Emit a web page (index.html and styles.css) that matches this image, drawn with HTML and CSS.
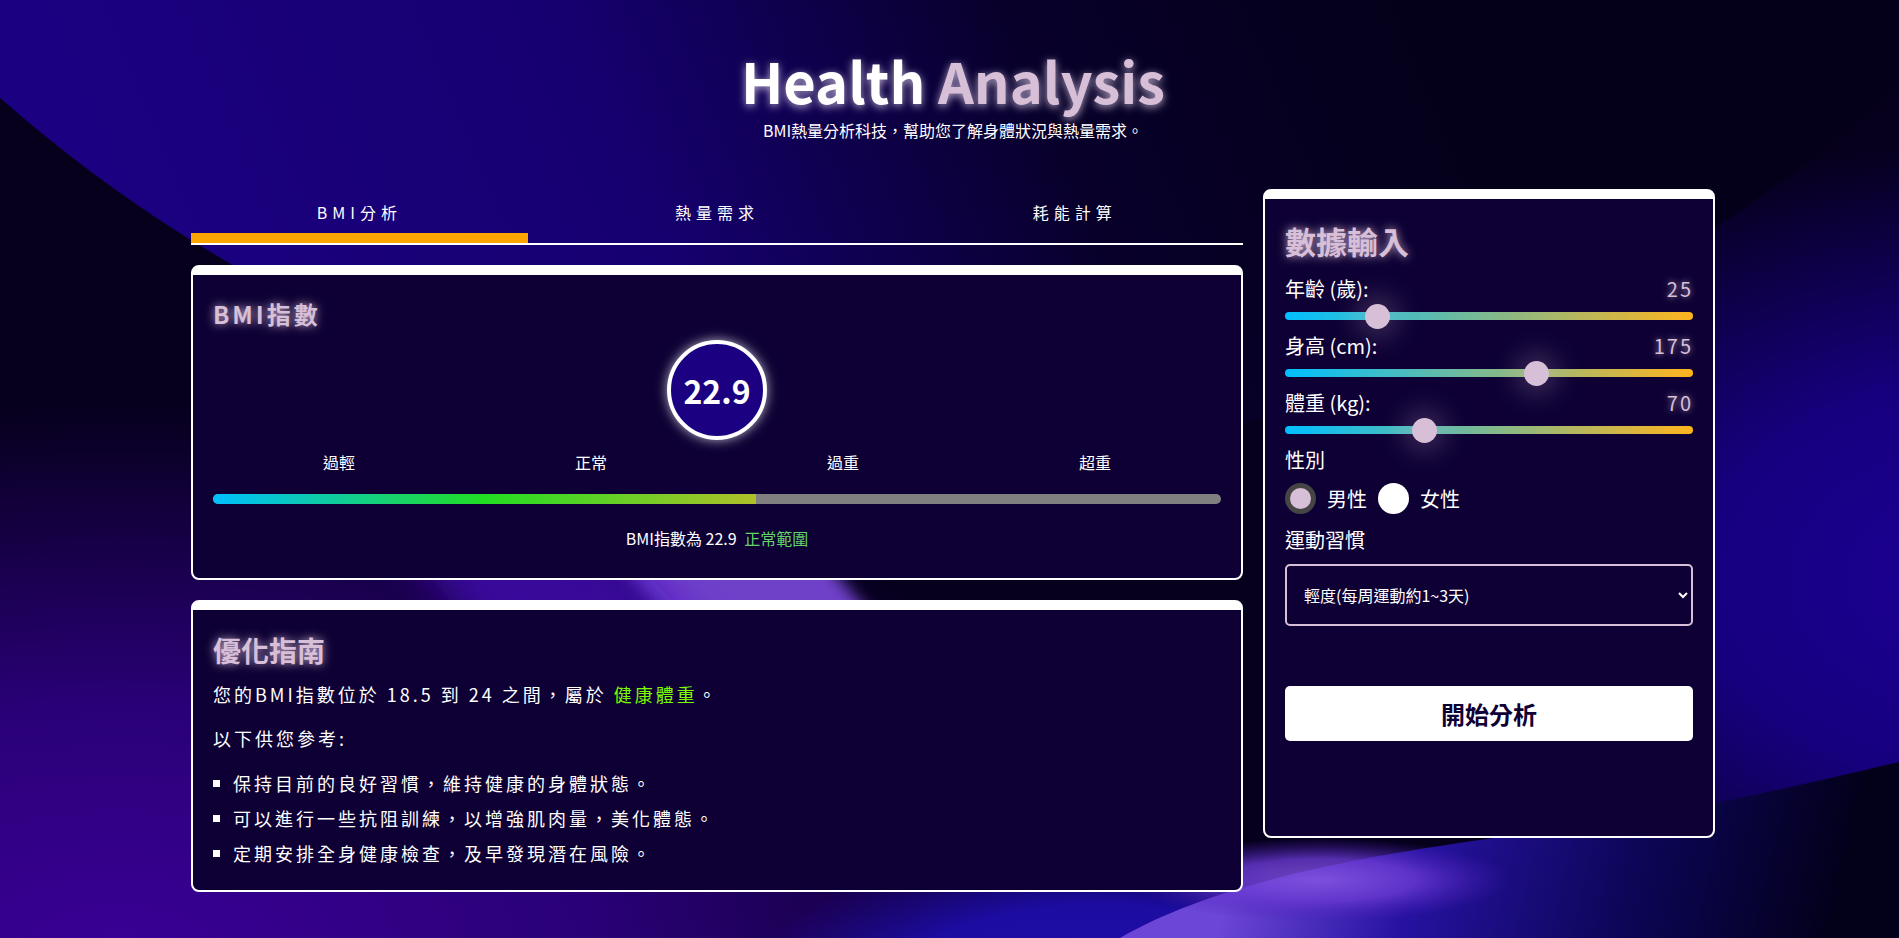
FILE: index.html
```html
<!DOCTYPE html>
<html lang="zh-Hant">
<head>
<meta charset="utf-8">
<title>Health Analysis</title>
<link rel="stylesheet" href="styles.css">
</head>
<body>
<svg class="bg" viewBox="0 0 1899 938" preserveAspectRatio="none" aria-hidden="true">
  <defs>
    <linearGradient id="gTop" gradientUnits="userSpaceOnUse" x1="150" y1="380" x2="1350" y2="-120">
      <stop offset="0" stop-color="#1c0082"/>
      <stop offset="0.4" stop-color="#160070"/>
      <stop offset="0.72" stop-color="#08002a"/>
      <stop offset="1" stop-color="#05001a"/>
    </linearGradient>
    <radialGradient id="gPurple" cx="0.5" cy="0.5" r="0.5">
      <stop offset="0" stop-color="#3a0096"/>
      <stop offset="0.45" stop-color="#2a0078"/>
      <stop offset="1" stop-color="#2a0078" stop-opacity="0"/>
    </radialGradient>
    <radialGradient id="gIndigo" cx="0.5" cy="0.5" r="0.5">
      <stop offset="0" stop-color="#1c0096"/>
      <stop offset="0.45" stop-color="#17007f"/>
      <stop offset="1" stop-color="#17007f" stop-opacity="0"/>
    </radialGradient>
    <radialGradient id="gViolet" cx="0.5" cy="0.5" r="0.5">
      <stop offset="0" stop-color="#8a58e6"/>
      <stop offset="0.5" stop-color="#6a3ad2"/>
      <stop offset="1" stop-color="#4a1cb8" stop-opacity="0"/>
    </radialGradient>
    <radialGradient id="gBlue" cx="0.5" cy="0.5" r="0.5">
      <stop offset="0" stop-color="#2210b0"/>
      <stop offset="0.6" stop-color="#1c0ca0"/>
      <stop offset="1" stop-color="#1c0ca0" stop-opacity="0"/>
    </radialGradient>
    <linearGradient id="gWave" gradientUnits="userSpaceOnUse" x1="1240" y1="840" x2="1820" y2="980">
      <stop offset="0" stop-color="#6c46d6"/>
      <stop offset="0.3" stop-color="#2612a0"/>
      <stop offset="0.65" stop-color="#0c0658"/>
      <stop offset="1" stop-color="#03001a"/>
    </linearGradient>
    <filter id="blur8"><feGaussianBlur stdDeviation="8"/></filter>
    <filter id="blur20"><feGaussianBlur stdDeviation="20"/></filter>
  </defs>
  <rect width="1899" height="938" fill="#06001c"/>
  <ellipse cx="120" cy="960" rx="1050" ry="560" fill="url(#gPurple)"/>
  <ellipse cx="1990" cy="580" rx="640" ry="440" fill="url(#gIndigo)"/>
  <circle cx="943" cy="-968" r="1423" fill="url(#gTop)"/>
  <ellipse cx="1100" cy="1000" rx="360" ry="160" fill="url(#gBlue)"/>
  <polygon points="580,520 790,520 1010,780 800,780" fill="#7a48da" filter="url(#blur8)" opacity="0.9"/>
  <polygon points="380,520 600,520 830,780 610,780" fill="#4a10c0" filter="url(#blur20)" opacity="0.7"/>
  <path d="M1120 938 C1220 880 1380 852 1540 832 C1690 812 1800 785 1899 762 L1899 938 Z" fill="url(#gWave)"/>
  <ellipse cx="1320" cy="880" rx="190" ry="42" fill="url(#gViolet)" opacity="0.8"/>
</svg>

<header class="hero">
  <h1 class="title">Health <span class="title-accent">Analysis</span></h1>
  <p class="subtitle">BMI熱量分析科技，幫助您了解身體狀況與熱量需求。</p>
</header>

<main class="layout">
  <section class="left-col">
    <nav class="tabs">
      <div class="tab active">BMI分析</div>
      <div class="tab">熱量需求</div>
      <div class="tab">耗能計算</div>
    </nav>

    <div class="card bmi-card">
      <h2 class="card-title">BMI指數</h2>
      <div class="bmi-circle">22.9</div>
      <div class="scale-labels">
        <span>過輕</span><span>正常</span><span>過重</span><span>超重</span>
      </div>
      <div class="bmi-bar"><div class="bmi-fill" style="width:53.9%"></div></div>
      <p class="bmi-result">BMI指數為 22.9 <span class="status">正常範圍</span></p>
    </div>

    <div class="card guide-card">
      <h2 class="card-title">優化指南</h2>
      <p class="guide-text">您的BMI指數位於 18.5 到 24 之間，屬於 <span class="highlight">健康體重</span>。</p>
      <p class="guide-text">以下供您參考:</p>
      <ul class="tips">
        <li>保持目前的良好習慣，維持健康的身體狀態。</li>
        <li>可以進行一些抗阻訓練，以增強肌肉量，美化體態。</li>
        <li>定期安排全身健康檢查，及早發現潛在風險。</li>
      </ul>
    </div>
  </section>

  <aside class="card side-card">
    <h2 class="card-title">數據輸入</h2>
    <div class="field">
      <div class="field-head"><span>年齡 (歲):</span><span class="field-value">25</span></div>
      <div class="slider"><span class="thumb" style="left:92px"></span></div>
    </div>
    <div class="field">
      <div class="field-head"><span>身高 (cm):</span><span class="field-value">175</span></div>
      <div class="slider"><span class="thumb" style="left:251px"></span></div>
    </div>
    <div class="field">
      <div class="field-head"><span>體重 (kg):</span><span class="field-value">70</span></div>
      <div class="slider"><span class="thumb" style="left:139px"></span></div>
    </div>
    <div class="field-label">性別</div>
    <div class="radios">
      <span class="radio checked"></span><span class="radio-label">男性</span>
      <span class="radio"></span><span class="radio-label">女性</span>
    </div>
    <div class="field-label sub">運動習慣</div>
    <select class="select">
      <option>輕度(每周運動約1~3天)</option>
    </select>
    <button class="btn" type="button">開始分析</button>
  </aside>
</main>
</body>
</html>
```

FILE: styles.css
```css
* { box-sizing: border-box; }

html, body { height: 938px; }

body {
  margin: 0;
  padding-left: 7px;
  position: relative;
  overflow: hidden;
  background: #06001c;
  color: #fff;
  font-family: "Noto Sans CJK TC", "Noto Sans", sans-serif;
}

.bg {
  position: absolute;
  left: 0;
  top: 0;
  width: 1899px;
  height: 938px;
  z-index: -1;
}

.hero {
  text-align: center;
  padding-top: 48px;
}

.title {
  margin: 0;
  font-size: 56px;
  line-height: 64px;
  font-weight: 700;
  text-shadow: 0 2px 9px rgba(230, 215, 240, 0.8);
}

.title-accent { color: #d8bfd8; }

.subtitle {
  margin: 6px 0 0;
  font-size: 16px;
  line-height: 24px;
}

.layout {
  display: flex;
  align-items: flex-start;
  gap: 20px;
  width: 1524px;
  margin: 47px auto 0;
}

.left-col { width: 1052px; flex: none; }

.tabs {
  display: flex;
  justify-content: space-between;
  border-bottom: 2px solid #fff;
}

.tab {
  width: 32%;
  text-align: center;
  padding: 11px 0 9px;
  border-bottom: 10px solid transparent;
  font-size: 16px;
  line-height: 24px;
  letter-spacing: 5px;
}

.tab.active { border-bottom-color: #ffa500; }

.card {
  background: #0e0034;
  border: 2px solid #fff;
  border-top-width: 10px;
  border-radius: 8px;
  padding: 20px;
}

.card-title {
  margin: 0;
  color: #d8bfd8;
  font-weight: 700;
  text-shadow: 0 0 10px rgba(216, 191, 216, 0.9);
}

.bmi-card {
  margin-top: 20px;
  padding-bottom: 28px;
}

.bmi-card .card-title {
  font-size: 24px;
  line-height: 38px;
  letter-spacing: 3px;
}

.bmi-circle {
  width: 100px;
  height: 100px;
  margin: 7px auto 0;
  border: 4px solid #fff;
  border-radius: 50%;
  background: #1c0082;
  display: flex;
  align-items: center;
  justify-content: center;
  font-size: 32px;
  font-weight: 700;
  box-shadow: 0 0 12px rgba(255, 255, 255, 0.7);
}

.scale-labels {
  display: grid;
  grid-template-columns: repeat(4, 1fr);
  text-align: center;
  margin-top: 10px;
  font-size: 16px;
  line-height: 24px;
}

.bmi-bar {
  margin-top: 20px;
  height: 10px;
  border-radius: 5px;
  background: #808080;
  overflow: hidden;
}

.bmi-fill {
  height: 100%;
  background: linear-gradient(to right, #00bfff, #22dd22 50%, #b0c02a);
}

.bmi-result {
  margin: 22px 0 0;
  text-align: center;
  font-size: 16px;
  line-height: 24px;
}

.bmi-result .status {
  color: #62d466;
  margin-left: 4px;
}

.guide-card {
  margin-top: 20px;
  padding-bottom: 25px;
}

.guide-card .card-title {
  font-size: 28px;
  line-height: 40px;
}

.guide-text {
  margin: 12px 0 0;
  font-size: 18px;
  line-height: 24px;
  letter-spacing: 3px;
}

.guide-text + .guide-text { margin-top: 20px; }

.highlight { color: #7cfc00; }

.tips {
  list-style: none;
  margin: 21px 0 0;
  padding: 0;
  font-size: 18px;
  line-height: 24px;
  letter-spacing: 3px;
}

.tips li {
  display: flex;
  align-items: center;
  gap: 13px;
  margin-bottom: 11px;
}

.tips li:last-child { margin-bottom: 0; }

.tips li::before {
  content: "";
  flex: none;
  width: 7px;
  height: 7px;
  background: #fff;
}

.side-card {
  width: 452px;
  flex: none;
  padding: 20px 20px 95px;
}

.side-card .card-title {
  font-size: 31px;
  line-height: 44px;
  margin-bottom: 11px;
}

.field { margin-bottom: 11px; }

.field-head {
  display: flex;
  justify-content: space-between;
  font-size: 20px;
  line-height: 30px;
}

.field-value {
  color: #d8bfd8;
  letter-spacing: 2px;
  text-shadow: 0 0 6px rgba(216, 191, 216, 0.8);
}

.slider {
  position: relative;
  height: 8px;
  margin-top: 8px;
  border-radius: 4px;
  background: linear-gradient(to right, #00bfff, #ffb41e);
}

.thumb {
  position: absolute;
  top: 50%;
  width: 25px;
  height: 25px;
  margin: -12.5px 0 0 -12.5px;
  border-radius: 50%;
  background: #d8bfd8;
  box-shadow: 0 0 24px 10px rgba(216, 191, 216, 0.2);
}

.field-label {
  font-size: 20px;
  line-height: 30px;
}

.field-label.sub { margin-top: 11px; }

.radios {
  display: flex;
  align-items: center;
  height: 31px;
  margin-top: 8px;
  font-size: 20px;
  line-height: 30px;
}

.radio {
  flex: none;
  width: 31px;
  height: 31px;
  border-radius: 50%;
  background: #fff;
}

.radio.checked {
  background: #d8bfd8;
  border: 5px solid #454545;
}

.radio-label { margin: 0 11px; }

.select {
  display: block;
  width: 100%;
  height: 62px;
  margin-top: 9px;
  padding: 0 10px 0 13px;
  border: 2px solid #d8bfd8;
  border-radius: 5px;
  background: #0e0034;
  color: #fff;
  font-family: inherit;
  font-size: 16px;
}

.btn {
  display: block;
  width: 100%;
  height: 55px;
  margin-top: 60px;
  border: none;
  border-radius: 5px;
  background: #fff;
  color: #0e0034;
  font-family: inherit;
  font-size: 24px;
  font-weight: 700;
}
```
